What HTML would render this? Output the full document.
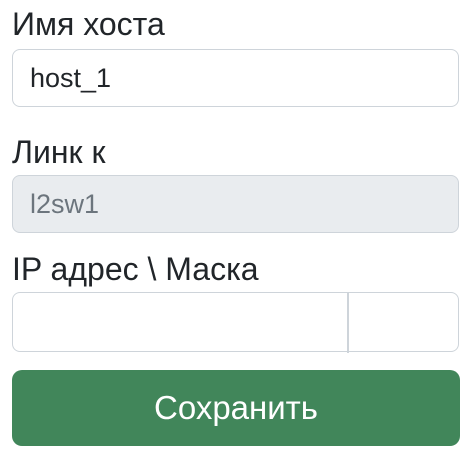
<!DOCTYPE html>
<html><head><style>
body{margin:0;background:#fff;font-family:"Liberation Sans",sans-serif;color:#212529;width:475px;height:458px;position:relative;overflow:hidden}
.l{position:absolute;left:12px;font-size:32px;line-height:34px}
.i{position:absolute;left:12px;width:443px;height:56px;border:1.5px solid #ced4da;border-radius:8px;font-size:27px;line-height:56px;padding-left:17px;box-sizing:content-box}
.b{position:absolute;left:12px;top:370px;width:448px;height:76px;background:#41865a;border-radius:10px;color:#fff;font-size:33px;line-height:76px;text-align:center}
</style></head><body>
<div class="l" style="top:7px">Имя хоста</div>
<div class="i" style="top:49px;width:428px">host_1</div>
<div class="l" style="top:135px">Линк к</div>
<div class="i" style="top:175px;width:428px;background:#e9ecef;color:#6c757d">l2sw1</div>
<div class="l" style="top:252px">IP адрес \ Маска</div>
<div class="i" style="top:292px;width:428px;height:58px"></div>
<div style="position:absolute;left:347px;top:293px;width:1.5px;height:60px;background:#ced4da"></div>
<div class="b">Сохранить</div>
</body></html>
